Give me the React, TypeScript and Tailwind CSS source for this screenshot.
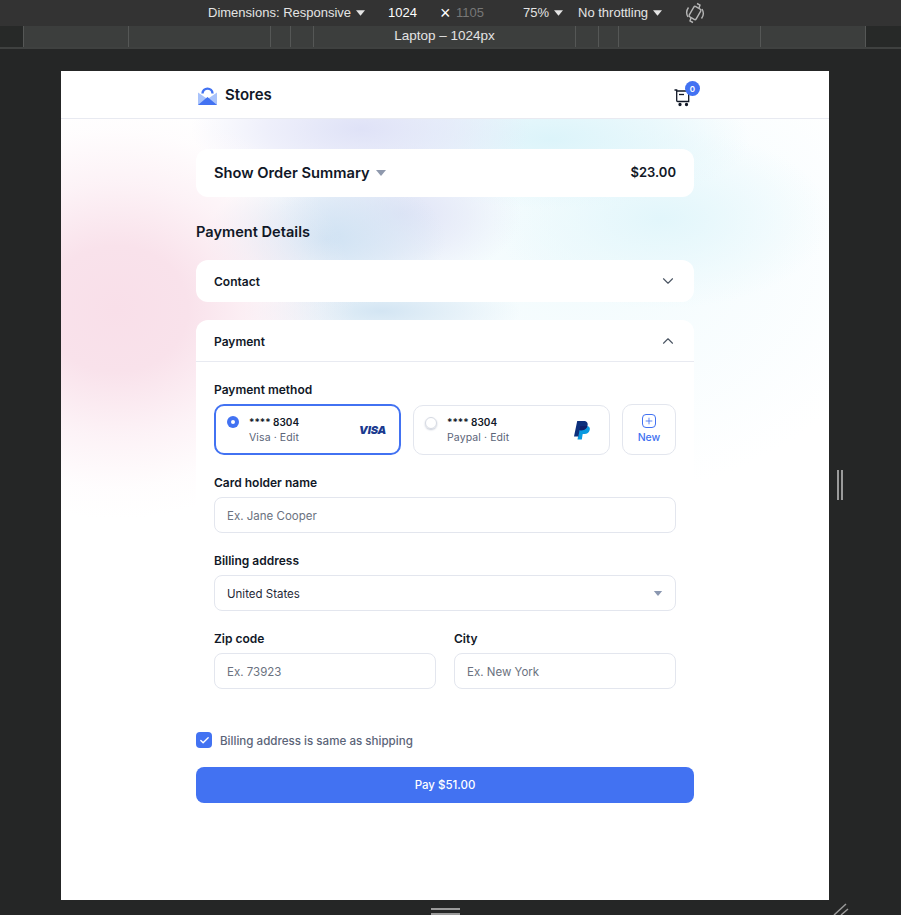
import { ChevronDown, ChevronUp, Check, Plus } from "lucide-react";

const Caret = ({ className }: { className: string }) => (
  <svg className={className} viewBox="0 0 10 6">
    <path d="M0 0h10L5 6z" fill="currentColor" />
  </svg>
);

const Logo = () => (
  <svg width="19" height="19" viewBox="0 0 19 19" fill="none">
    <path d="M4.500 7.500C4.500 1 14.500 1 14.500 7.500" stroke="#4272f2" strokeWidth="2.400" />
    <path d="M0 6.500l9.500 6.500L19 6.500V19H0z" fill="#a9c3fb" />
    <path d="M0 19l9.500-8 9.500 8z" fill="#4272f2" />
  </svg>
);

const Cart = () => (
  <svg width="18" height="20" viewBox="0 0 18 20" fill="none" stroke="#111827" strokeWidth="1.300">
    <path d="M0.500 3h2.200v10.500c0 .6.400 1 1 1h11V4H3" />
    <path d="M5 7.500h5" />
    <circle cx="6" cy="17.500" r="1" fill="#111827" />
    <circle cx="12.500" cy="17.500" r="1" fill="#111827" />
  </svg>
);

const PaypalMark = () => (
  <svg width="16" height="19" viewBox="0 0 16 19">
    <path d="M6 5h6.500c2.600 0 3.800 1.600 3.200 4-.6 2.800-2.600 4-5.200 4H8.700L7.800 18.500H3.500z" fill="#0a9ae0" />
    <path d="M3.200 0h6.300c3.300 0 4.700 1.900 4.100 4.500-.7 3-3 4.700-6 4.700H5.500L4.500 15.500H0z" fill="#0d2f7c" />
    <path d="M5.500 9.200h2.100c2.800 0 5-1.500 5.800-4.200L6.300 5z" fill="#10206b" />
  </svg>
);

const Field = ({ label, value, dark }: { label: string; value: string; dark?: boolean }) => (
  <div className="flex-1">
    <div className="mb-[7px] text-[12px] leading-[15px] font-semibold text-[#111827]">{label}</div>
    <div
      className={`flex h-9 items-center rounded-lg border border-[#e3e6ee] bg-white px-3 pt-[3px] text-[11.500px] ${
        dark ? "justify-between text-[#1f2937]" : "text-[#6b7280]"
      }`}
    >
      {value}
      {dark && <Caret className="mb-[3px] h-[5px] w-[10px] text-[#8a97b0]" />}
    </div>
  </div>
);

const App = () => {
  const rulerStops = [105, 142, 20, 23, 262, 23, 20, 142, 105];

  return (
    <div className="relative flex h-[915px] w-[901px] flex-col overflow-hidden bg-[#252626] font-['Inter',sans-serif]">
      {/* devtools toolbar */}
      <div className="flex h-[26px] items-center bg-[#333333] pl-[208px] font-['Liberation_Sans',sans-serif] text-[13px] text-[#e4e4e4]">
        <span className="w-[145px] whitespace-nowrap">Dimensions: Responsive</span>
        <Caret className="ml-[3px] h-[6px] w-[9px]" />
        <span className="ml-[23px] w-[29px] text-white">1024</span>
        <span className="ml-[23px] w-[16px] text-[18px] leading-[18px] text-white">×</span>
        <span className="w-[29px] text-[#777777]">1105</span>
        <span className="ml-[38px] w-[28px]">75%</span>
        <Caret className="ml-[3px] h-[6px] w-[9px]" />
        <span className="ml-[15px] w-[72px] whitespace-nowrap">No throttling</span>
        <Caret className="ml-[3px] h-[6px] w-[9px]" />
        <svg className="ml-[23px]" width="20" height="22" viewBox="0 0 20 22" fill="none" stroke="#b5b5b5" strokeWidth="1.400">
          <rect x="6" y="5" width="8" height="12" rx="1.500" transform="rotate(30 10 11)" />
          <path d="M3 15A8.500 8.500 0 0 1 3.500 5.500M17 7a8.500 8.500 0 0 1-.5 9.500M12 1.500l3 1.500-1 3M8 20.500l-3-1.500 1-3" />
        </svg>
      </div>

      {/* ruler */}
      <div className="flex h-[23px] border-b-2 border-[#3f4140] bg-[#272928] pl-[23px]">
        <div className="flex w-[843px] items-stretch border-x border-[#555756] bg-[#3c3e3d]">
          {rulerStops.map((width, i) => (
            <div
              key={i}
              className="flex shrink-0 items-center justify-center border-r border-[#555756] font-['Liberation_Sans',sans-serif] text-[13.500px] whitespace-nowrap text-[#e4e4e4] last:border-r-0"
              style={{ width }}
            >
              {i === 4 ? "Laptop – 1024px" : ""}
            </div>
          ))}
        </div>
      </div>

      {/* emulated page */}
      <div className="mt-[22px] ml-[61px] h-[829px] w-[768px] bg-white">
        <header className="flex h-12 items-center justify-between border-b border-[#e8eaf1] pt-[1px] pr-[130px] pl-[137px]">
          <div className="flex items-center gap-2">
            <Logo />
            <span className="text-[15px] font-semibold text-[#111827]">Stores</span>
          </div>
          <div className="relative mt-[4px] mr-[7px] h-5 w-[18px]">
            <Cart />
            <span className="absolute -top-[6px] -right-[8px] flex h-[15px] w-[15px] items-center justify-center rounded-full bg-[#4272f2] text-[8px] font-semibold text-white">
              0
            </span>
          </div>
        </header>

        <main className="h-[781px] bg-[radial-gradient(ellipse_240px_210px_at_55px_190px,#f9dfe9_0%,#f9e2eb_30%,#fbeaf199_60%,#fdf3f733_85%,transparent_100%),radial-gradient(ellipse_170px_70px_at_300px_10px,#dfe2f7_0%,#e3e5f899_55%,transparent_100%),radial-gradient(ellipse_120px_70px_at_265px_120px,#cfe2f3_0%,#d5e5f499_55%,transparent_100%),radial-gradient(ellipse_120px_70px_at_340px_95px,#dfe3f6_0%,#e3e7f799_55%,transparent_100%),radial-gradient(ellipse_140px_40px_at_320px_192px,#d3e5f3_0%,#dbeaf599_55%,transparent_100%),radial-gradient(ellipse_200px_70px_at_490px_20px,#dcf4fa_0%,#e2f6fb99_60%,transparent_100%),radial-gradient(ellipse_170px_90px_at_600px_100px,#e2f6fb_0%,#e8f8fc99_55%,transparent_100%),radial-gradient(ellipse_330px_250px_at_520px_130px,#f1fbfd_0%,#f5fcfe99_60%,transparent_100%)] px-[135px] pt-[30px]">
          <section className="flex h-12 items-center justify-between rounded-xl bg-white px-[18px]">
            <div className="flex items-center gap-[5px]">
              <span className="text-[14.700px] font-semibold text-[#111827]">Show Order Summary</span>
              <Caret className="h-[6px] w-[12px] text-[#8f99ad]" />
            </div>
            <span className="text-[13px] font-semibold text-[#111827]">$23.00</span>
          </section>

          <h2 className="mt-[25px] text-[14.600px] leading-[20px] font-semibold text-[#111827]">Payment Details</h2>

          <section className="mt-[18px] flex h-[42px] items-center justify-between rounded-xl bg-white pr-[17px] pl-[18px]">
            <span className="pt-[2px] text-[12px] font-semibold text-[#111827]">Contact</span>
            <ChevronDown className="h-[18px] w-[18px] text-[#4b5563]" strokeWidth={1.500} />
          </section>

          <section className="mt-[18px] rounded-t-xl bg-white">
            <div className="flex h-[42px] items-center justify-between border-b border-[#e8eaf1] pr-[17px] pl-[18px]">
              <span className="pt-[2px] text-[12px] font-semibold text-[#111827]">Payment</span>
              <ChevronUp className="h-[18px] w-[18px] text-[#4b5563]" strokeWidth={1.500} />
            </div>

            <div className="px-[18px] pt-[20px]">
              <div className="mb-[7px] text-[12px] leading-[15px] font-semibold text-[#111827]">Payment method</div>
              <div className="flex h-[51px] gap-3">
                <div className="flex w-[187px] items-start rounded-[10px] border-2 border-[#4272f2] pt-[10px] pl-[11px]">
                  <span className="flex h-3 w-3 items-center justify-center rounded-full bg-[#4272f2]">
                    <span className="h-1 w-1 rounded-full bg-white" />
                  </span>
                  <div className="-mt-px ml-[10px] flex-1">
                    <div className="text-[10px] leading-[14px] font-semibold text-[#111827]">**** 8304</div>
                    <div className="mt-[2px] text-[10.500px] leading-[14px] tracking-[0.1px] text-[#5b6478]">Visa · Edit</div>
                  </div>
                  <span className="mt-[7px] mr-[13px] text-[11px] leading-[15px] font-black tracking-[-0.2px] text-[#1a3a8f] italic">VISA</span>
                </div>

                <div className="mt-px flex h-[50px] w-[197px] items-start rounded-[10px] border border-[#e3e6ee] pt-[10px] pl-[11px]">
                  <span className="mt-px h-3 w-3 rounded-full border border-[#d5d9e2] shadow-[0_1px_2px_#c5cad6]" />
                  <div className="-mt-px ml-[10px] flex-1">
                    <div className="text-[10px] leading-[14px] font-semibold text-[#111827]">**** 8304</div>
                    <div className="mt-[2px] text-[10.500px] leading-[14px] tracking-[0.1px] text-[#5b6478]">Paypal · Edit</div>
                  </div>
                  <div className="mt-[5px] mr-[19px]">
                    <PaypalMark />
                  </div>
                </div>

                <div className="flex w-[54px] flex-col items-center justify-center gap-[2px] rounded-[10px] border border-[#e3e6ee]">
                  <span className="flex h-[14px] w-[14px] items-center justify-center rounded-[4px] border border-[#4272f2]">
                    <Plus className="h-[10px] w-[10px] text-[#4272f2]" strokeWidth={2} />
                  </span>
                  <span className="text-[10.500px] leading-[15px] font-medium text-[#4272f2]">New</span>
                </div>
              </div>

              <div className="mt-[20px]">
                <Field label="Card holder name" value="Ex. Jane Cooper" />
              </div>
              <div className="mt-[20px]">
                <Field label="Billing address" value="United States" dark />
              </div>
              <div className="mt-[20px] flex gap-[18px]">
                <Field label="Zip code" value="Ex. 73923" />
                <Field label="City" value="Ex. New York" />
              </div>
            </div>
          </section>

          <div className="mt-[43px] flex h-4 items-center gap-2">
            <span className="flex h-4 w-4 items-center justify-center rounded-[4px] bg-[#4272f2]">
              <Check className="h-[11px] w-[11px] text-white" strokeWidth={3} />
            </span>
            <span className="pt-[2px] text-[11.600px] leading-[14px] font-medium text-[#5b6478]">Billing address is same as shipping</span>
          </div>

          <button
            type="button"
            className="mt-[19px] flex h-9 w-full items-center justify-center rounded-lg bg-[#4272f2] pt-[2px] text-[11.500px] font-medium text-white"
          >
            Pay $51.00
          </button>
        </main>
      </div>

      {/* resize handles */}
      <div className="absolute top-[470px] left-[837px] h-[30px] w-[6px] border-x-2 border-[#9a9a9a]" />
      <div className="absolute top-[908px] left-[431px] h-[7px] w-[29px] border-t-2 border-b-2 border-[#9a9a9a]" />
      <svg className="absolute top-[903px] left-[832px]" width="18" height="12" viewBox="0 0 18 12" stroke="#9a9a9a" strokeWidth="1.500">
        <path d="M2 12L14 1M9 12L16 6" />
      </svg>
    </div>
  );
};

export default App;
